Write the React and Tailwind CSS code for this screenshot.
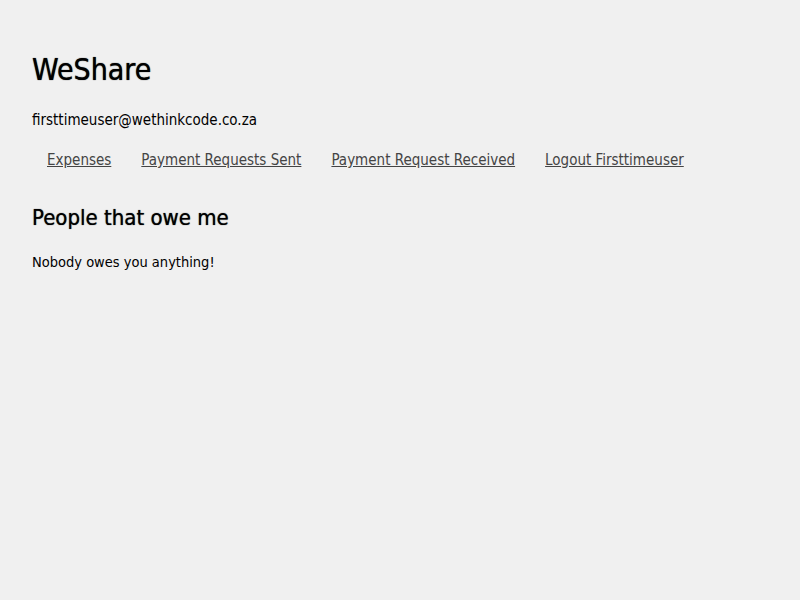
export default function App() {
    const links = ["Expenses", "Payment Requests Sent", "Payment Request Received", "Logout Firsttimeuser"];

    return (
        <div className="min-h-screen bg-[#f0f0f0] px-8 pt-[50px] text-black [font-family:'DejaVu_Sans_Condensed','Liberation_Sans',sans-serif]">
            <h1 className="text-[30px] leading-[40px] [text-shadow:0_0_1px_rgba(0,0,0,0.9)]">WeShare</h1>
            <div className="mt-[20px] text-[15px] leading-[20px]">firsttimeuser@wethinkcode.co.za</div>
            <nav className="mt-[20px] flex pl-[15px] gap-[30px] text-[15px] leading-[20px]">
                {links.map((l) => (
                    <a key={l} href="#" className="text-[#444] underline">
                        {l}
                    </a>
                ))}
            </nav>
            <h2 className="mt-[33px] text-[22px] leading-[30px] [text-shadow:0_0_1px_rgba(0,0,0,0.8)]">People that owe me</h2>
            <p className="mt-[19px] text-[14.5px] leading-[20px]">Nobody owes you anything!</p>
        </div>
    );
}
